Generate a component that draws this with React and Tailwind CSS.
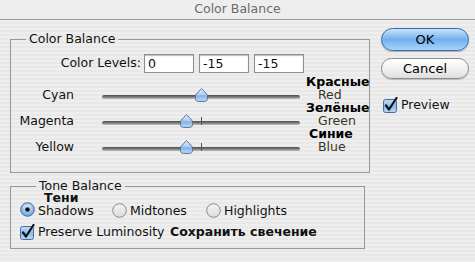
import { useState } from "react";

const font = { fontFamily: '"DejaVu Sans", sans-serif' };

function Thumb() {
  return (
    <svg width="13" height="14" viewBox="0 0 13 14">
      <defs>
        <linearGradient id="thumbFill" x1="0" y1="0" x2="0" y2="1">
          <stop offset="0" stopColor="#e6f0fb" />
          <stop offset="0.5" stopColor="#a9cbef" />
          <stop offset="0.55" stopColor="#7fb0e6" />
          <stop offset="1" stopColor="#c6def7" />
        </linearGradient>
      </defs>
      <path
        d="M6.5 0.7 C8 2.2 10.5 4.5 11.8 6.2 C12.4 7 12.5 7.6 12.5 8.5 L12.5 10.5 C12.5 12.3 11.3 13.4 9.5 13.4 L3.5 13.4 C1.7 13.4 0.5 12.3 0.5 10.5 L0.5 8.5 C0.5 7.6 0.6 7 1.2 6.2 C2.5 4.5 5 2.2 6.5 0.7 Z"
        fill="url(#thumbFill)"
        stroke="#4d6e9c"
        strokeWidth="1"
      />
    </svg>
  );
}

function Slider({ left, tick }) {
  return (
    <div className="relative w-[198px] h-[14px] ml-[28px]">
      <div className="absolute left-0 right-0 top-[7px] h-[4px] rounded-full bg-gradient-to-b from-[#4e4e4e] via-[#7a7a7a] to-[#c4c4c4]" />
      {tick && <div className="absolute left-[99px] top-[3px] w-[1px] h-[8px] bg-[#555]" />}
      <div className="absolute top-0" style={{ left }}>
        <Thumb />
      </div>
    </div>
  );
}

function SliderRow({ name, ru, en, thumb, tick, ruShift }) {
  return (
    <div className="flex items-end h-[26px]">
      <div className="w-[63px] text-right leading-[14px]">{name}</div>
      <Slider left={thumb} tick={tick} />
      <div className="flex flex-col ml-[6px]">
        <div className={"font-bold text-black leading-[13px] " + (ruShift ? "ml-[3px]" : "")}>{ru}</div>
        <div className="ml-[12px] leading-[13px] mb-[1px] text-[#3b3322]">{en}</div>
      </div>
    </div>
  );
}

function Radio({ on }) {
  return (
    <svg width="15" height="15" viewBox="0 0 15 15">
      <defs>
        <radialGradient id="radOn" cx="0.5" cy="0.35" r="0.7">
          <stop offset="0" stopColor="#e8f2fc" />
          <stop offset="0.6" stopColor="#8fbcea" />
          <stop offset="1" stopColor="#5b93d4" />
        </radialGradient>
        <linearGradient id="radOff" x1="0" y1="0" x2="0" y2="1">
          <stop offset="0" stopColor="#f4f4f4" />
          <stop offset="1" stopColor="#dcdcdc" />
        </linearGradient>
      </defs>
      <circle cx="7.5" cy="7.5" r="6.8" fill={on ? "url(#radOn)" : "url(#radOff)"} stroke={on ? "#4a6c9b" : "#8a8a8a"} />
      {on && <circle cx="7.5" cy="7.5" r="2.3" fill="#111" />}
    </svg>
  );
}

function Check() {
  return (
    <svg width="16" height="16" viewBox="0 0 16 16">
      <defs>
        <linearGradient id="chk" x1="0" y1="0" x2="0" y2="1">
          <stop offset="0" stopColor="#c7def7" />
          <stop offset="0.5" stopColor="#8dbbeb" />
          <stop offset="1" stopColor="#b9d7f6" />
        </linearGradient>
      </defs>
      <rect x="0.5" y="2.5" width="13" height="13" rx="2" fill="url(#chk)" stroke="#4a6c9b" />
      <path d="M3 8.5 L6 12.5 L13.5 1" fill="none" stroke="#111" strokeWidth="2.2" strokeLinecap="round" strokeLinejoin="round" />
    </svg>
  );
}

export default function App() {
  const [tone, setTone] = useState("shadows");

  return (
    <div
      className="w-[475px] h-[262px] overflow-hidden text-[12.5px] text-[#111] bg-[repeating-linear-gradient(180deg,#eeeeee_0px,#eeeeee_2px,#e8e8e8_2px,#e8e8e8_4px)]"
      style={font}
    >
      <div className="h-[20px] border-b border-[#9c9c9c] flex items-center justify-center text-[12.5px] text-[#6a6a6a] bg-[#eeeeee]">
        Color Balance
      </div>

      <div className="flex">
        <div className="ml-[10px] w-[355px]">
          <fieldset className="mt-[11px] border border-[#979797] pb-[18px]">
            <legend className="ml-[15px] px-[3px] leading-[16px]">Color Balance</legend>
            <div className="flex items-center mt-[7px]">
              <div className="w-[130px] text-right">Color Levels:</div>
              <div className="flex gap-[5px] ml-[3px]">
                {["0", "-15", "-15"].map((v, i) => (
                  <input
                    key={i}
                    readOnly
                    value={v}
                    className="w-[50px] h-[19px] px-[3px] bg-white border border-[#8e8e8e] shadow-[inset_0_1px_1px_#bbb] text-[12.5px] outline-none"
                    style={font}
                  />
                ))}
              </div>
            </div>
            <div className="mt-[3px]">
              <SliderRow name="Cyan" ru="Красные" en="Red" thumb={93} />
              <SliderRow name="Magenta" ru="Зелёные" en="Green" thumb={78} tick />
              <SliderRow name="Yellow" ru="Синие" en="Blue" thumb={78} tick ruShift />
            </div>
          </fieldset>

          <fieldset className="mt-[7px] border border-[#979797] pl-[9px] pb-[9px]">
            <legend className="ml-[16px] px-[3px] leading-[12px]">Tone Balance</legend>
            <div className="flex items-end">
              <label className="flex items-end w-[92px]" onClick={() => setTone("shadows")}>
                <span className="mb-[1px]"><Radio on={tone === "shadows"} /></span>
                <span className="flex flex-col ml-[3px]">
                  <span className="font-bold leading-[12px] ml-[6px]">Тени</span>
                  <span className="leading-[14px]">Shadows</span>
                </span>
              </label>
              <label className="flex items-end w-[94px]" onClick={() => setTone("midtones")}>
                <span className="mb-[0px]"><Radio on={tone === "midtones"} /></span>
                <span className="leading-[14px] ml-[3px]">Midtones</span>
              </label>
              <label className="flex items-end" onClick={() => setTone("highlights")}>
                <span className="mb-[0px]"><Radio on={tone === "highlights"} /></span>
                <span className="leading-[14px] ml-[3px]">Highlights</span>
              </label>
            </div>
            <div className="flex items-center mt-[7px] h-[14px]">
              <div className="flex items-center w-[150px]">
                <Check />
                <span className="ml-[2px]">Preserve Luminosity</span>
              </div>
              <span className="font-bold">Сохранить свечение</span>
            </div>
          </fieldset>
        </div>

        <div className="ml-[16px] w-[88px] pt-[8px]">
          <button className="w-[88px] h-[23px] rounded-full border border-[#3a6aa8] bg-gradient-to-b from-[#c9e3fb] via-[#72b0ee] to-[#a8d4fb] text-[13px] text-black shadow-[0_1px_1px_rgba(0,0,0,0.25)]" style={font}>
            OK
          </button>
          <button className="mt-[7px] w-[88px] h-[21px] rounded-full border border-[#8c8c8c] bg-gradient-to-b from-white via-[#f2f2f2] to-[#dedede] text-[13px] text-black shadow-[0_1px_1px_rgba(0,0,0,0.2)]" style={font}>
            Cancel
          </button>
          <div className="flex items-center mt-[17px] ml-[2px]">
            <Check />
            <span className="ml-[2px] text-[12.5px]">Preview</span>
          </div>
        </div>
      </div>
    </div>
  );
}
